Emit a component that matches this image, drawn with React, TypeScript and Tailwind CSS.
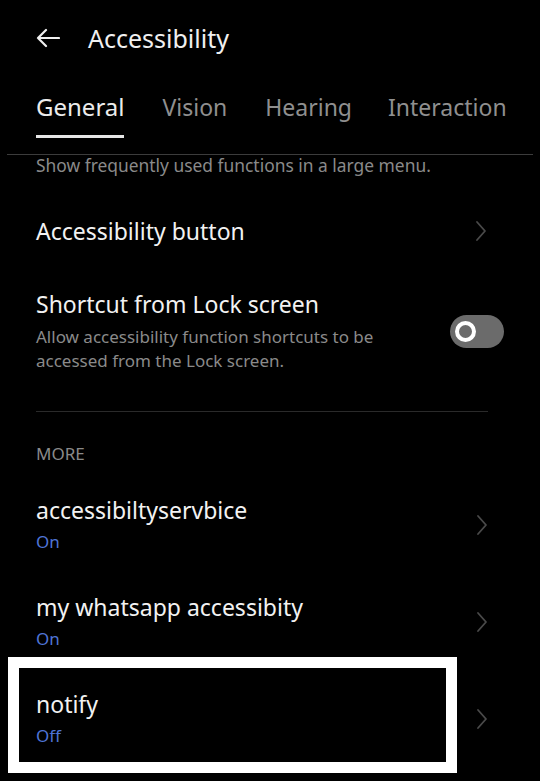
import React from "react"

function Chevron() {
  return (
    <svg width="12" height="22" viewBox="0 0 12 22" fill="none" className="shrink-0">
      <path d="M2 2 L10 11 L2 20" stroke="#4a4a4a" strokeWidth="1.8" strokeLinecap="round" strokeLinejoin="round" />
    </svg>
  )
}

function ServiceRow({ title, status }: { title: string; status: string }) {
  return (
    <div className="flex items-center justify-between pr-[52px]">
      <div>
        <p className="text-[23px] leading-[30px] text-[#f2f2f2]">{title}</p>
        <p className="mt-[5px] text-[17px] leading-[24px] text-[#4f74d6]">{status}</p>
      </div>
      <Chevron />
    </div>
  )
}

export default function App() {
  return (
    <div className="relative w-[540px] h-[781px] bg-black overflow-hidden font-['Noto_Sans',sans-serif]">
      <header className="h-[75px] flex items-center pl-[36px] gap-[28px]">
        <svg width="24" height="20" viewBox="0 0 24 20" fill="none">
          <path d="M23 10 H2 M10 2 L2 10 L10 18" stroke="#f0f0f0" strokeWidth="2.2" strokeLinecap="round" strokeLinejoin="round" />
        </svg>
        <h1 className="text-[25px] leading-[32px] text-[#f0f0f0]">Accessibility</h1>
      </header>

      <nav className="mx-[7px] border-b border-[#3c3c3c] pl-[29px] pb-[16px] pt-[16px] flex">
        <div className="flex flex-col">
          <span className="text-[24px] leading-[32px] text-[#ececec]">General</span>
          <span className="mt-[12px] h-[3px] bg-[#e6e6e6]" />
        </div>
        <span className="ml-[38px] text-[23px] leading-[32px] text-[#8f8f8f]">Vision</span>
        <span className="ml-[38px] text-[23px] leading-[32px] text-[#8f8f8f]">Hearing</span>
        <span className="ml-[36px] text-[23px] leading-[32px] text-[#8f8f8f]">Interaction</span>
      </nav>

      <main className="overflow-hidden h-[626px] px-[36px]">
        <p className="text-[17.4px] leading-[20px] text-[#8a8a8a]">
          Show frequently used functions in a large menu.
        </p>

        <div className="mt-[41px] flex items-center justify-between pr-[17px]">
          <p className="text-[23px] leading-[30px] text-[#f2f2f2]">Accessibility button</p>
          <Chevron />
        </div>

        <div className="mt-[43px] flex items-center justify-between">
          <div>
            <p className="text-[23px] leading-[30px] text-[#f2f2f2]">Shortcut from Lock screen</p>
            <p className="mt-[6px] text-[17px] leading-[24px] text-[#8a8a8a] w-[360px]">
              Allow accessibility function shortcuts to be accessed from the Lock screen.
            </p>
          </div>
          <div className="w-[54px] h-[33px] rounded-full bg-[#6b6b6b] flex items-center pl-[5px]">
            <div className="w-[21px] h-[21px] rounded-full border-[4px] border-white bg-[#6b6b6b]" />
          </div>
        </div>

        <div className="mt-[38px] h-px bg-[#2a2a2a] mr-[16px]" />

        <p className="mt-[32px] text-[17px] leading-[20px] text-[#8a8a8a]">MORE</p>

        <div className="mt-[31px] flex flex-col gap-[38px] -mr-[36px]">
          <ServiceRow title="accessibiltyservbice" status="On" />
          <ServiceRow title="my whatsapp accessibity" status="On" />
          <ServiceRow title="notify" status="Off" />
        </div>
      </main>

      <div className="absolute left-[8px] top-[657px] w-[449px] h-[116px] border-[11px] border-white" />
    </div>
  )
}
